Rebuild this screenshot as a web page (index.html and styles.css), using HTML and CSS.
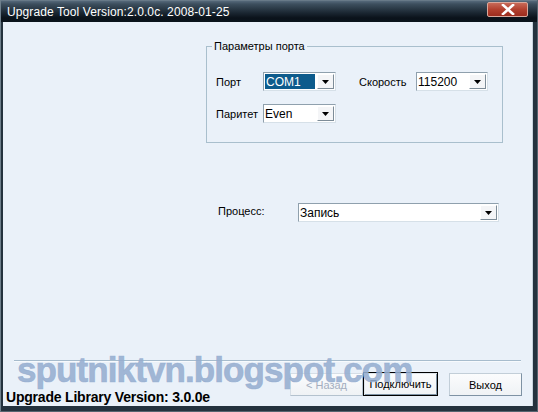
FILE: index.html
```html
<!DOCTYPE html>
<html lang="ru">
<head>
<meta charset="utf-8">
<title>Upgrade Tool</title>
<link rel="stylesheet" href="styles.css">
</head>
<body>
<div class="window">
  <div class="titlebar">
    <span class="title">Upgrade Tool Version:2.0.0c. 2008-01-25</span>
    <span class="close">
      <svg width="14" height="11" viewBox="0 0 14 11"><path d="M2 1 L12 10 M12 1 L2 10" stroke="#fff" stroke-width="2.6" stroke-linecap="square"/></svg>
    </span>
  </div>
  <div class="client">
    <fieldset class="group">
      <legend>Параметры порта</legend>
      <div class="grid">
        <span class="lbl">Порт</span>
        <div class="combo"><span class="val"><span class="sel">COM1</span></span><span class="drop"><svg width="7" height="4" viewBox="0 0 7 4"><path d="M0 0 H7 L3.5 4 Z" fill="#000"/></svg></span></div>
        <span class="lbl lbl-speed">Скорость</span>
        <div class="combo combo-speed"><span class="val">115200</span><span class="drop"><svg width="7" height="4" viewBox="0 0 7 4"><path d="M0 0 H7 L3.5 4 Z" fill="#000"/></svg></span></div>
        <span class="lbl">Паритет</span>
        <div class="combo"><span class="val">Even</span><span class="drop"><svg width="7" height="4" viewBox="0 0 7 4"><path d="M0 0 H7 L3.5 4 Z" fill="#000"/></svg></span></div>
      </div>
    </fieldset>
    <div class="process">
      <span class="lbl lbl-process">Процесс:</span>
      <div class="combo combo-process"><span class="val">Запись</span><span class="drop"><svg width="7" height="4" viewBox="0 0 7 4"><path d="M0 0 H7 L3.5 4 Z" fill="#000"/></svg></span></div>
    </div>
    <div class="spacer"></div>
    <div class="separator"></div>
    <div class="bottom">
      <div class="status">Upgrade Library Version: 3.0.0e</div>
      <div class="buttons">
        <span class="btn btn-disabled">&lt; Назад</span>
        <span class="btn btn-default">Подключить</span>
        <span class="btn btn-exit">Выход</span>
      </div>
    </div>
    <div class="watermark">sputniktvn.blogspot.com</div>
  </div>
</div>
</body>
</html>
```

FILE: styles.css
```css
html, body {
  margin: 0;
  padding: 0;
  background: #2a3640;
}

.window {
  width: 538px;
  height: 412px;
  box-sizing: border-box;
  display: flex;
  flex-direction: column;
  background: #24323e;
  border-left: 1px solid #6f808c;
  border-right: 1px solid #55646f;
  border-bottom: 1px solid #55646f;
  font-family: "Liberation Sans", Arial, sans-serif;
}

.titlebar {
  height: 22px;
  flex: none;
  display: flex;
  align-items: flex-start;
  justify-content: space-between;
  background: linear-gradient(#7b8b96 0px, #55687a 1px, #3d4f5e 4px, #1a2631 13px, #0a121a 18px, #0b141c 22px);
}

.title {
  color: #fff;
  font-size: 12px;
  line-height: 14px;
  padding: 5px 0 0 6px;
  letter-spacing: 0.1px;
}

.close {
  margin: 2px 9px 0 0;
  width: 41px;
  height: 15px;
  box-sizing: border-box;
  border: 1px solid #d8a89c;
  border-radius: 2px;
  background: linear-gradient(#c86a58, #b2402e 50%, #9c2c1e);
  display: flex;
  align-items: center;
  justify-content: center;
}

.client {
  position: relative;
  flex: 1;
  margin: 0 4px 5px 2px;
  background: #eaf1f9;
  display: flex;
  flex-direction: column;
  border-right: 1px solid #c6d2dc;
  overflow: hidden;
}

.group {
  margin: 17px 0 0 203px;
  width: 297px;
  box-sizing: border-box;
  padding: 0 0 19px 5px;
  border: 1px solid #a9bfcd;
  border-radius: 0;
}

.group legend {
  padding: 0 2px;
  font-size: 11px;
  line-height: 14px;
  color: #000;
}

.grid {
  display: grid;
  grid-template-columns: 47px 73px 80px 72px;
  row-gap: 13px;
  margin: 19px 0 0 4px;
  align-items: center;
}

.lbl {
  font-size: 11px;
  color: #000;
}

.lbl-speed {
  padding-left: 23px;
}

.combo {
  height: 19px;
  box-sizing: border-box;
  display: flex;
  background: #fff;
  border: 1px solid;
  border-color: #8fa0ad #d6e0e8 #d6e0e8 #8fa0ad;
}

.grid .combo { width: 73px; }
.grid .combo-speed { width: 72px; }

.val {
  flex: 1;
  display: flex;
  align-items: center;
  font-size: 12px;
  padding-left: 1px;
  color: #000;
}

.sel {
  align-self: stretch;
  flex: 1;
  display: flex;
  align-items: center;
  background: #0d5b8c;
  color: #fff;
  margin: 1px 1px 1px 0;
  padding-left: 1px;
}

.drop {
  width: 17px;
  margin: 1px;
  box-sizing: border-box;
  background: #f4f5f7;
  border: 1px solid;
  border-color: #ffffff #7d8c98 #7d8c98 #ffffff;
  display: flex;
  align-items: center;
  justify-content: center;
}

.process {
  display: flex;
  align-items: center;
  margin: 60px 0 0 215px;
}

.lbl-process {
  width: 80px;
  margin-top: -3px;
}

.combo-process {
  width: 201px;
}

.spacer {
  flex: 1;
}

.separator {
  height: 0;
  margin: 0 11px 0 11px;
  border-top: 1px solid #a7bccd;
  border-bottom: 1px solid #f7fafd;
}

.bottom {
  height: 44px;
  display: flex;
  justify-content: space-between;
  align-items: flex-start;
}

.status {
  align-self: flex-end;
  margin: 0 0 1px 3px;
  font-size: 14px;
  font-weight: bold;
  line-height: 16px;
  color: #000;
  letter-spacing: -0.2px;
}

.buttons {
  display: flex;
  margin: 11px 10px 0 0;
}

.btn {
  width: 73px;
  height: 23px;
  box-sizing: border-box;
  display: flex;
  align-items: center;
  justify-content: center;
  font-size: 11px;
  color: #000;
  background: linear-gradient(#fbfcfd, #eff2f5);
  border: 1px solid;
  border-color: #c2ced8 #7e92a4 #7e92a4 #c2ced8;
}

.btn-disabled {
  color: #a4aebf;
  border-color: #d6dee6 #b4c2ce #b4c2ce #d6dee6;
}

.btn-default {
  width: 75px;
  height: 24px;
  border: 1px solid #000;
  box-shadow: inset 1px 1px 0 #dfe6ec, inset -1px -1px 0 #7e92a4;
  margin-top: -1px;
}

.btn-exit {
  margin-left: 11px;
}

.watermark {
  position: absolute;
  left: 14px;
  top: 328px;
  font-family: "Liberation Sans", Arial, sans-serif;
  font-weight: bold;
  font-size: 35px;
  line-height: 40px;
  letter-spacing: -0.9px;
  color: rgba(150, 174, 208, 0.88);
  -webkit-text-stroke: 0.7px rgba(150, 174, 208, 0.88);
  pointer-events: none;
  white-space: nowrap;
}
```
